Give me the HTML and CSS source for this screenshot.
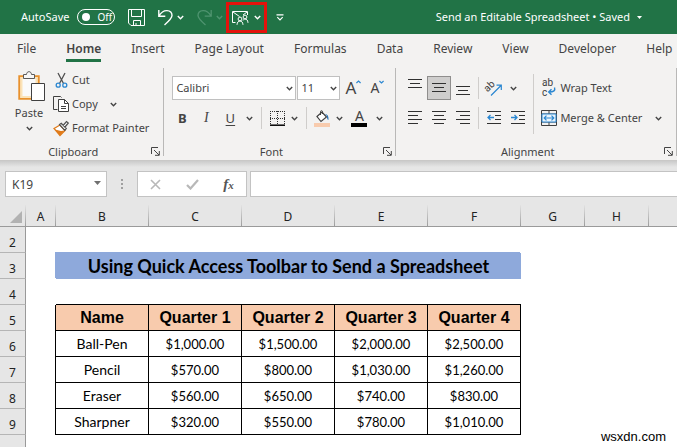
FILE: index.html
```html
<!DOCTYPE html>
<html lang="en">
<head>
<meta charset="utf-8">
<meta name="viewport" content="width=device-width, initial-scale=1">
<title>Send an Editable Spreadsheet</title>
<link rel="stylesheet" href="styles.css">
</head>
<body>
<svg class="defs" aria-hidden="true">
  <symbol id="chev" viewBox="0 0 7 5"><path d="M.8 1 3.500 3.700 6.200 1" fill="none" stroke="currentColor" stroke-width="1.400"/></symbol>
  <symbol id="launch" viewBox="0 0 9 9"><path d="M.5 7V.5H7M3 3l5 5M8.300 4v4.300H4" fill="none" stroke="currentColor"/></symbol>
</svg>

<header class="titlebar">
  <label class="autosave">AutoSave
    <input type="checkbox" class="autosave-box"><span class="toggle"><span class="knob"></span>Off</span>
  </label>
  <div class="quick">
    <button class="q" aria-label="Save"><svg width="17" height="17" viewBox="0 0 17 17" fill="none" stroke="#fff"><path d="M.5.5h16v16H3L.5 14zM3.500.5v7h10v-7M5.500 16.500v-5h7v5M8 14v2.500" /></svg></button>
    <button class="q undo" aria-label="Undo"><svg width="15" height="17" viewBox="0 0 15 17" fill="none" stroke="#fff" stroke-width="1.400"><path d="M.8 1v6.200h6.500M1 7C3 3.500 6 1.500 9 1.600c3 .1 5 2.200 5 5C14 9.500 10 13 6.500 16"/></svg></button>
    <button class="q small" aria-label="Undo list"><svg width="7" height="5"><use href="#chev"/></svg></button>
    <button class="q dim redo" aria-label="Redo"><svg width="15" height="17" viewBox="0 0 15 17" fill="none" stroke="currentColor" stroke-width="1.300"><path d="M14.200 1v6.200H7.700M14 7C12 3.500 9 1.500 6 1.600c-3 .1-5 2.200-5 5C1 9.500 5 13 8.500 16"/></svg></button>
    <button class="q small dim" aria-label="Redo list"><svg width="7" height="5"><use href="#chev"/></svg></button>
    <div class="marked">
      <button class="q" aria-label="Send for review"><svg width="17" height="15" viewBox="0 0 17 15" fill="none" stroke="#fff"><path d="M3.500 12.500h-3v-11h15V5M1 2l6.500 4.500M15 2l-4 3"/><circle cx="8" cy="9" r="1.900" fill="#217346"/><path d="M5 14.800c.2-2.500 1.300-3.800 3-3.800s2.800 1.300 3 3.800"/><circle cx="13" cy="7" r="1.900" fill="#217346"/><path d="M11 10.500c.5-1 1.100-1.500 2-1.500 1.700 0 2.800 1.300 3 3.800"/></svg></button>
      <button class="q small" aria-label="Send options"><svg width="7" height="5"><use href="#chev"/></svg></button>
    </div>
    <button class="q small" aria-label="Customize toolbar"><svg width="8" height="7" viewBox="0 0 8 7" fill="none" stroke="#fff" stroke-width="1.200"><path d="M.5.8h7M1.300 3.200 4 5.900l2.700-2.700"/></svg></button>
  </div>
  <button class="doc">Send an Editable Spreadsheet • Saved <svg width="5" height="3" viewBox="0 0 5 3"><path d="M0 0h5L2.500 3z" fill="#fff"/></svg></button>
</header>

<nav class="tabs">
  <a href="#">File</a><a href="#" class="active" aria-current="page">Home</a><a href="#">Insert</a><a href="#">Page Layout</a><a href="#">Formulas</a><a href="#">Data</a><a href="#">Review</a><a href="#">View</a><a href="#">Developer</a><a href="#">Help</a>
</nav>

<section class="ribbon">
  <div class="group">
    <div class="clip">
      <button class="paste">
        <svg width="28" height="32" viewBox="0 0 28 32" fill="none"><path d="M1.200 5.200h19.600v22.600H1.200z" fill="#fbe3b8" stroke="#e8912d" stroke-width="1.800"/><path d="M4.500 8h13v17h-13z" fill="#fafafa"/><path d="M5.500 7.500v-4h3C8.700 1.500 9.700.7 11 .7s2.300.8 2.500 2.800h3v4z" fill="#f7f7f7" stroke="#5a5a5a"/><path d="M13.500 12.500h13v17h-13z" fill="#fff" stroke="#404040"/></svg>
        <span>Paste</span>
        <svg class="down" width="7" height="5"><use href="#chev"/></svg>
      </button>
      <div class="clip-list">
        <button class="line"><svg width="17" height="17" viewBox="0 0 17 17" fill="none"><path d="M5 1l5.500 10.500M12 1 6.500 11.500" stroke="#505050" stroke-width="1.300"/><circle cx="5.200" cy="13.200" r="2" stroke="#2b87d1" stroke-width="1.300"/><circle cx="11.800" cy="13.200" r="2" stroke="#2b87d1" stroke-width="1.300"/></svg><span>Cut</span></button>
        <button class="line"><svg width="17" height="17" viewBox="0 0 17 17" fill="none" stroke="#404040"><path d="M4.500 13.500h-4V.5h7l1 1"/><path d="M5.500 3.500h6l4 4v8h-10z" fill="#fff"/><path d="M11.500 3.500v4h4M8 10.500h5M8 12.500h5"/></svg><span>Copy</span><svg class="after" width="7" height="5"><use href="#chev"/></svg></button>
        <button class="line"><svg width="17" height="17" viewBox="0 0 17 17"><path d="M1 8.500 7 5l5 5.500L7 15.500z" fill="#fff" stroke="#e07b1a" stroke-width="1.300"/><path d="m2 9.500 6 1.500 3.500-.5L7 15.500z" fill="#e07b1a"/><path d="m6.500 4.500 1.800-1.200 5 5.200-1.500 1.800zM10 5.500 13.500 1.500l1.800 1.500L12 7" fill="#fff" stroke="#505050" stroke-width="1.200"/></svg><span>Format Painter</span></button>
      </div>
    </div>
    <div class="foot"><span>Clipboard</span><button aria-label="Clipboard settings"><svg width="9" height="9"><use href="#launch"/></svg></button></div>
  </div>
  <div class="divider"></div>

  <div class="group">
    <div class="rows font-rows">
      <div class="row combos">
        <div class="combo name"><select aria-label="Font"><option>Calibri</option></select><svg width="7" height="5"><use href="#chev"/></svg></div>
        <div class="combo size"><select aria-label="Font size"><option>11</option></select><svg width="7" height="5"><use href="#chev"/></svg></div>
        <button class="ic letter big" aria-label="Increase font size">A<svg width="5" height="4" viewBox="0 0 5 4"><path d="M.4 3 2.500 1l2.100 2" fill="none" stroke="#2b87d1" stroke-width="1.200"/></svg></button>
        <button class="ic letter" aria-label="Decrease font size">A<svg width="5" height="4" viewBox="0 0 5 4"><path d="m.4 1 2.100 2 2.100-2" fill="none" stroke="#2b87d1" stroke-width="1.200"/></svg></button>
      </div>
      <div class="row">
        <button class="ic bold">B</button><button class="ic ital">I</button><button class="ic under">U</button><button class="ch" aria-label="Underline options"><svg width="7" height="5"><use href="#chev"/></svg></button>
        <i class="sep wide"></i>
        <button class="ic narrow" aria-label="Borders"><svg width="15" height="15" viewBox="0 0 15 15" fill="none" stroke="#303030"><path d="M.5 0v13M14.500 0v13M0 .5h15M0 7.500h15M7.500 0v13" stroke-dasharray="1 1"/><path d="M0 14.200h15" stroke="#000" stroke-width="1.500"/></svg></button><button class="ch" aria-label="Border options"><svg width="7" height="5"><use href="#chev"/></svg></button>
        <i class="sep wide"></i>
        <button class="ic narrow" aria-label="Fill color"><svg width="16" height="17" viewBox="0 0 16 17" fill="none"><path d="M3 6.500 8 2l4.500 5L7 11.500z" fill="#fff" stroke="#404040" stroke-width="1.200"/><path d="M6.500 5V1.500c0-1 2-1 2 0V4" stroke="#404040"/><path d="M11 4c2.500 0 3.800 2 3.500 6-1.500-.5-1.500-2.500-1.500-4z" fill="#2370b8"/><path d="M0 13h16v4H0z" fill="#f8cbad"/></svg></button><button class="ch" aria-label="Fill options"><svg width="7" height="5"><use href="#chev"/></svg></button>
        <button class="ic color" aria-label="Font color"><span>A</span></button><button class="ch" aria-label="Font color options"><svg width="7" height="5"><use href="#chev"/></svg></button>
      </div>
    </div>
    <div class="foot"><span>Font</span><button aria-label="Font settings"><svg width="9" height="9"><use href="#launch"/></svg></button></div>
  </div>
  <div class="divider"></div>

  <div class="group grow">
    <div class="align">
      <div class="rows">
        <div class="row">
          <button class="ic" aria-label="Top align"><svg width="14" height="18" viewBox="0 0 14 18" stroke="#303030"><path d="M0 .5h14M2 4.500h10M0 8.500h14"/></svg></button><button class="ic pressed" aria-label="Middle align"><svg width="14" height="18" viewBox="0 0 14 18" stroke="#303030"><path d="M0 4.500h14M2 8.500h10M0 12.500h14"/></svg></button><button class="ic" aria-label="Bottom align"><svg width="14" height="18" viewBox="0 0 14 18" stroke="#303030"><path d="M0 7.500h14M2 11.500h10M0 15.500h14"/></svg></button>
          <i class="sep"></i>
          <button class="ic" aria-label="Orientation"><svg width="18" height="17" viewBox="0 0 18 17"><text x="2" y="11" transform="rotate(-45 4 11)" class="ab">ab</text><path d="M6 15.500 16 5.500M11.500 5.200h4.800V10" fill="none" stroke="#2b87d1" stroke-width="1.200"/></svg></button><button class="ch" aria-label="Orientation options"><svg width="7" height="5"><use href="#chev"/></svg></button>
        </div>
        <div class="row">
          <button class="ic" aria-label="Align left"><svg width="14" height="14" viewBox="0 0 14 14" stroke="#303030"><path d="M0 .5h14M0 4.500h10M0 8.500h14M0 12.500h10"/></svg></button><button class="ic" aria-label="Center"><svg width="14" height="14" viewBox="0 0 14 14" stroke="#303030"><path d="M0 .5h14M2 4.500h10M0 8.500h14M2 12.500h10"/></svg></button><button class="ic" aria-label="Align right"><svg width="14" height="14" viewBox="0 0 14 14" stroke="#303030"><path d="M0 .5h14M4 4.500h10M0 8.500h14M4 12.500h10"/></svg></button>
          <i class="sep"></i>
          <button class="ic" aria-label="Decrease indent"><svg width="14" height="14" viewBox="0 0 14 14" fill="none" stroke="#303030"><path d="M0 .5h14M8 4.500h6M8 8.500h6M0 12.500h14"/><path d="M7 6.500H1M3.500 4 1 6.500 3.500 9" stroke="#2b87d1" stroke-width="1.300"/></svg></button><button class="ic" aria-label="Increase indent"><svg width="14" height="14" viewBox="0 0 14 14" fill="none" stroke="#303030"><path d="M0 .5h14M8 4.500h6M8 8.500h6M0 12.500h14"/><path d="M0 6.500h6M3.500 4 6 6.500 3.500 9" stroke="#2b87d1" stroke-width="1.300"/></svg></button>
        </div>
      </div>
      <i class="sep tall"></i>
      <div class="rows">
        <button class="row wrap"><svg width="16" height="18" viewBox="0 0 16 18"><text x="1" y="7" class="ab">ab</text><text x="1" y="17" class="ab">c</text><path d="M13.500 8.500c1 3-.5 4.500-5.500 4.500M10.500 10.200 7.700 13l2.800 2.700" fill="none" stroke="#2b87d1" stroke-width="1.400"/></svg><span>Wrap Text</span></button>
        <button class="row wrap"><svg width="16" height="16" viewBox="0 0 16 16" fill="none"><path d="M.5.5h15v15H.5zM.5 4h15M.5 12h15M8 .5V4M8 12v3.500" stroke="#404040"/><path d="M1 4h14v8H1z" fill="#eaf4fc" stroke="#2b87d1"/><path d="M3 8h10M5.500 5.700 3.200 8l2.300 2.300M10.500 5.700 12.800 8l-2.300 2.300" stroke="#2b87d1" stroke-width="1.200"/></svg><span>Merge &amp; Center</span><svg class="after" width="7" height="5"><use href="#chev"/></svg></button>
      </div>
    </div>
    <div class="foot"><span>Alignment</span><button aria-label="Alignment settings"><svg width="9" height="9"><use href="#launch"/></svg></button></div>
  </div>
  <div class="divider"></div>
</section>

<section class="formula">
  <div class="namebox"><input type="text" value="K19" aria-label="Name box"><svg width="7" height="4" viewBox="0 0 7 4"><path d="M0 0h7L3.500 4z" fill="#707070"/></svg></div>
  <svg class="grip" width="2" height="11" viewBox="0 0 2 11" fill="#a0a0a0"><path d="M0 0h2v2H0zM0 4h2v2H0zM0 8h2v2H0z"/></svg>
  <div class="fxbox">
    <button aria-label="Cancel"><svg width="11" height="11" viewBox="0 0 11 11"><path d="m1 1 9 9M10 1l-9 9" stroke="#b8b8b8" stroke-width="1.600"/></svg></button>
    <button aria-label="Enter"><svg width="13" height="11" viewBox="0 0 13 11"><path d="m1 6 3.500 3.500L12 1" fill="none" stroke="#b8b8b8" stroke-width="2.200"/></svg></button>
    <button class="fx" aria-label="Insert function">f<small>x</small></button>
  </div>
  <input class="entry" type="text" aria-label="Formula bar">
</section>

<main class="sheet">
  <table>
    <colgroup><col class="c-row"><col class="c-a"><col class="c-wide"><col class="c-wide"><col class="c-wide"><col class="c-wide"><col class="c-wide"><col class="c-std"><col class="c-std"><col></colgroup>
    <thead><tr><th class="corner"><svg width="12" height="12" viewBox="0 0 12 12"><path d="M12 0v12H0z" fill="#b2b2b2"/></svg></th><th>A</th><th>B</th><th>C</th><th>D</th><th>E</th><th>F</th><th>G</th><th>H</th><th></th></tr></thead>
    <tbody>
      <tr><th>2</th><td colspan="9"></td></tr>
      <tr><th>3</th><td></td><td colspan="5" class="title">Using Quick Access Toolbar to Send a Spreadsheet</td><td colspan="3"></td></tr>
      <tr><th>4</th><td></td><td class="u"></td><td class="u"></td><td class="u"></td><td class="u"></td><td class="u"></td><td colspan="3"></td></tr>
      <tr class="head"><th>5</th><td class="edge"></td><td class="d">Name</td><td class="d">Quarter 1</td><td class="d">Quarter 2</td><td class="d">Quarter 3</td><td class="d">Quarter 4</td><td colspan="3"></td></tr>
      <tr><th>6</th><td class="edge"></td><td class="d">Ball-Pen</td><td class="d n">$1,000.00</td><td class="d n">$1,500.00</td><td class="d n">$2,000.00</td><td class="d n">$2,500.00</td><td colspan="3"></td></tr>
      <tr><th>7</th><td class="edge"></td><td class="d">Pencil</td><td class="d n">$570.00</td><td class="d n">$800.00</td><td class="d n">$1,030.00</td><td class="d n">$1,260.00</td><td colspan="3"></td></tr>
      <tr><th>8</th><td class="edge"></td><td class="d">Eraser</td><td class="d n">$560.00</td><td class="d n">$650.00</td><td class="d n">$740.00</td><td class="d n">$830.00</td><td colspan="3"></td></tr>
      <tr><th>9</th><td class="edge"></td><td class="d">Sharpner</td><td class="d n">$320.00</td><td class="d n">$550.00</td><td class="d n">$780.00</td><td class="d n">$1,010.00</td><td colspan="3"></td></tr>
      <tr class="last"><th></th><td colspan="9"></td></tr>
    </tbody>
  </table>
  <div class="credit">wsxdn.com</div>
</main>
</body>
</html>
```
FILE: styles.css
```css
* { box-sizing: border-box; }
body {
  margin: 0;
  min-height: 100vh;
  display: flex;
  flex-direction: column;
  overflow: hidden;
  background: #fff;
  color: #444;
  font: 12px/16px "Noto Sans", "Open Sans", sans-serif;
}
button, input, select { font: inherit; color: inherit; }
button { padding: 0; border: 0; background: none; white-space: nowrap; }
svg { display: block; flex: none; }
.defs { position: absolute; width: 0; height: 0; }

/* Title bar */
.titlebar {
  height: 34px;
  display: flex;
  align-items: center;
  padding-left: 21px;
  background: #217346;
  color: #fff;
  font-size: 11px;
}
.autosave { display: flex; align-items: center; gap: 8px; }
.autosave-box { position: absolute; opacity: 0; }
.toggle {
  width: 38px;
  height: 16px;
  display: flex;
  align-items: center;
  gap: 7px;
  padding-left: 4px;
  border: 1px solid #fff;
  border-radius: 8px;
  font-size: 10px;
}
.knob { width: 8px; height: 8px; border-radius: 50%; background: #fff; }
.quick { display: flex; align-items: center; margin-left: 13px; }
.q { display: flex; align-items: center; justify-content: center; }
.q.undo { margin-left: 13px; }
.q.redo { margin-left: 10px; }
.q.small { width: 14px; }
.q.dim { color: #4f9470; }
.marked {
  width: 41px;
  height: 31px;
  display: flex;
  align-items: center;
  gap: 2px;
  padding-left: 3px;
  margin-right: 6px;
  border: 3px solid #e3120b;
}
.doc { display: flex; align-items: center; gap: 7px; margin-left: auto; margin-right: 35px; }

/* Tabs */
.tabs {
  height: 30px;
  display: flex;
  gap: 30px;
  padding: 5px 0 0 17px;
  background: #f3f2f1;
  line-height: 20px;
}
.tabs a { height: 23px; color: #444; text-decoration: none; white-space: nowrap; }
.tabs .active { border-bottom: 3px solid #217346; font-weight: 600; }

/* Ribbon */
.ribbon { display: flex; background: #f3f2f1; border-bottom: 1px solid #c9c8c7; font-size: 11px; }
.group { display: flex; flex-direction: column; flex: none; }
.grow { flex: 1; min-width: 0; }
.divider { width: 1px; margin: 4px 0; background: #b9b8b7; }
.foot { display: flex; align-items: center; height: 17px; margin-top: auto; padding-right: 3px; }
.foot span { flex: 1; text-align: center; padding-right: 5px; }
.clip { display: flex; padding: 4px 14px 3px 15px; }
.paste { display: flex; flex-direction: column; align-items: center; width: 28px; margin-right: 10px; padding-top: 3px; }
.paste > svg:first-child { margin-left: 6px; }
.paste span { margin-top: 2px; }
.paste .down { margin-top: 5px; }
.clip-list { display: flex; flex-direction: column; }
.line { height: 24px; display: flex; align-items: center; gap: 2px; }
.after { margin-left: 10px; }
.rows { display: flex; flex-direction: column; gap: 6px; padding-top: 12px; }
.font-rows { padding: 12px 6px 0; }
.row { height: 24px; display: flex; align-items: center; }
.combos { padding-left: 2px; }
.combo { position: relative; height: 24px; margin-right: 1px; }
.combo select {
  width: 100%;
  height: 100%;
  padding: 0 3px;
  border: 1px solid #c0c0c0;
  border-radius: 0;
  background: #fff;
  appearance: none;
}
.combo svg { position: absolute; right: 3px; top: 10px; }
.combo.name { width: 124px; }
.combo.size { width: 43px; }
.ic { width: 24px; height: 24px; display: flex; align-items: center; justify-content: center; flex: none; }
.narrow { width: 20px; }
.ch { width: 14px; height: 24px; display: flex; align-items: center; justify-content: center; flex: none; }
.letter { font-size: 14px; }
.letter svg { align-self: flex-start; margin-top: 4px; }
.big { font-size: 17px; }
.bold { font-weight: 700; font-size: 13px; }
.ital { font: italic 14px "Liberation Serif", serif; }
.under { font-size: 13px; text-decoration: underline; text-underline-offset: 2px; }
.color { width: 26px; font-size: 14px; }
.color span { width: 16px; line-height: 14px; border-bottom: 4px solid #000; text-align: center; }
.pressed { background: #cfcecd; border: 1px solid #8f8e8d; }
.sep { width: 1px; height: 22px; margin: 0 3px; background: #cfcdcb; }
.sep.wide { margin: 0 5px; }
.sep.tall { height: 60px; margin: 10px 7px 0 3px; }
.align { display: flex; padding-left: 7px; }
.align svg { overflow: visible; }
.wrap { gap: 3px; }
.ab { font: 10px Roboto, sans-serif; fill: #404040; }

/* Formula bar */
.formula {
  display: flex;
  align-items: center;
  padding: 10px 0 8px 5px;
  background: linear-gradient(#cbcbcb, #e6e6e6 6px);
}
.namebox { position: relative; width: 102px; height: 26px; }
.namebox input { width: 100%; height: 100%; padding: 0 6px; border: 1px solid #c3c3c3; background: #fff; }
.namebox svg { position: absolute; right: 6px; top: 10px; }
.grip { margin: 0 14px; }
.fxbox { display: flex; align-items: center; justify-content: space-around; width: 110px; height: 26px; border: 1px solid #c3c3c3; background: #fff; }
.fx { font: italic bold 15px "Liberation Serif", serif; color: #555; }
.fx small { font-size: 11px; }
.entry { flex: 1; min-width: 0; height: 26px; margin-left: 3px; border: 1px solid #c3c3c3; border-right: 0; background: #fff; }

/* Worksheet */
.sheet { position: relative; flex: 1; }
table { width: 100%; table-layout: fixed; border-collapse: separate; border-spacing: 0; }
.c-row { width: 26px; }
.c-a { width: 30px; }
.c-wide { width: 93px; }
.c-std { width: 64px; }
th, td { padding: 0; height: 26px; }
th { font-weight: 400; color: #222; background: #e6e6e6; }
thead th {
  height: 22px;
  padding-top: 3px;
  border-bottom: 1px solid #999;
  border-right: 1px solid;
  border-image: linear-gradient(#e6e6e6, #999) 1;
}
thead th:last-child { border-right: 0; }
.corner svg { margin-left: 10px; }
tbody th { border-right: 1px solid #999; border-bottom: 1px solid #b5b5b5; padding-top: 6px; font-size: 12px; }
td { color: #000; text-align: center; font-family: Lato, "Open Sans", sans-serif; font-size: 14px; }
.title { background: #8ea9db; box-shadow: -1px -1px 0 #8ea9db; font-size: 18px; line-height: 20px; font-weight: 700; }
.d { border-right: 1px solid #000; border-bottom: 1px solid #000; }
.n { font-size: 13px; }
.u { border-bottom: 1px solid #000; }
.edge { border-right: 1px solid #000; }
.head .d { background: #f8cbad; font: bold 16px "Liberation Sans", Arial, sans-serif; }
.last th, .last td { height: 12px; padding: 0; border-bottom: 0; }
.credit { position: absolute; right: 11px; bottom: 2px; color: #000; font: 13px/16px "Liberation Sans", Arial, sans-serif; }
```
